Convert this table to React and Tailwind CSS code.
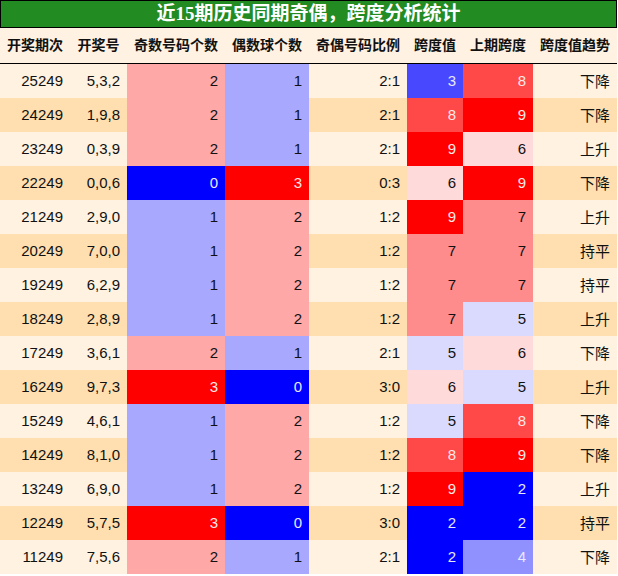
const rows = [
  ["25249", "5,3,2", 2, 1, "2:1", 3, 8, "下降"],
  ["24249", "1,9,8", 2, 1, "2:1", 8, 9, "下降"],
  ["23249", "0,3,9", 2, 1, "2:1", 9, 6, "上升"],
  ["22249", "0,0,6", 0, 3, "0:3", 6, 9, "下降"],
  ["21249", "2,9,0", 1, 2, "1:2", 9, 7, "上升"],
  ["20249", "7,0,0", 1, 2, "1:2", 7, 7, "持平"],
  ["19249", "6,2,9", 1, 2, "1:2", 7, 7, "持平"],
  ["18249", "2,8,9", 1, 2, "1:2", 7, 5, "上升"],
  ["17249", "3,6,1", 2, 1, "2:1", 5, 6, "下降"],
  ["16249", "9,7,3", 3, 0, "3:0", 6, 5, "上升"],
  ["15249", "4,6,1", 1, 2, "1:2", 5, 8, "下降"],
  ["14249", "8,1,0", 1, 2, "1:2", 8, 9, "下降"],
  ["13249", "6,9,0", 1, 2, "1:2", 9, 2, "上升"],
  ["12249", "5,7,5", 3, 0, "3:0", 2, 2, "持平"],
  ["11249", "7,5,6", 2, 1, "2:1", 2, 4, "下降"],
];

// odd / even count cells
const countCls = {
  0: "bg-[#0000ff] text-[#e8e8ff]",
  1: "bg-[#a8a8ff] text-[#111]",
  2: "bg-[#ffa8a8] text-[#111]",
  3: "bg-[#ff0000] text-[#ffe8e8]",
};

// span cells
const spanCls = {
  2: "bg-[#0000ff] text-[#e8e8ff]",
  3: "bg-[#4848ff] text-[#e8e8ff]",
  4: "bg-[#9090ff] text-[#e8e8ff]",
  5: "bg-[#dadaff] text-[#111]",
  6: "bg-[#ffdada] text-[#111]",
  7: "bg-[#ff8c8c] text-[#111]",
  8: "bg-[#ff4848] text-[#ffe8e8]",
  9: "bg-[#ff0000] text-[#ffe8e8]",
};

const headers = [
  ["开奖期次", "w-[70px]"],
  ["开奖号", "w-[57px]"],
  ["奇数号码个数", "w-[98px]"],
  ["偶数球个数", "w-[84px]"],
  ["奇偶号码比例", "w-[98px]"],
  ["跨度值", "w-[56px]"],
  ["上期跨度", "w-[70px]"],
  ["跨度值趋势", "flex-1"],
];

function Cell({ w, cls = "", children }) {
  return (
    <div className={`${w} ${cls} h-full flex items-center justify-end pr-[7px]`}>
      {children}
    </div>
  );
}

export default function App() {
  return (
    <div
      className="w-[618px] h-[576px] bg-white text-[15px] text-[#111]"
      style={{ fontFamily: '"Liberation Sans", Arial, "Noto Sans CJK SC", sans-serif' }}
    >
      <div className="w-[617px]">
        <div
          className="h-[28px] bg-[#228b22] border border-black flex items-center justify-center text-white font-bold text-[19px]"
          style={{ fontFamily: '"Liberation Serif", "Noto Sans CJK SC", serif' }}
        >
          近15期历史同期奇偶，跨度分析统计
        </div>
        <div className="h-[36px] bg-[#fff2e2] border-b border-black flex items-center font-bold text-[14px]">
          {headers.map(([t, w]) => (
            <div key={t} className={`${w} text-center`}>
              {t}
            </div>
          ))}
        </div>
        {rows.map((r, i) => (
          <div
            key={r[0]}
            className={`h-[34px] flex ${i % 2 === 0 ? "bg-[#fff2e1]" : "bg-[#ffdfb0]"}`}
          >
            <Cell w="w-[70px]">{r[0]}</Cell>
            <Cell w="w-[57px]">{r[1]}</Cell>
            <Cell w="w-[98px]" cls={countCls[r[2]]}>{r[2]}</Cell>
            <Cell w="w-[84px]" cls={countCls[r[3]]}>{r[3]}</Cell>
            <Cell w="w-[98px]">{r[4]}</Cell>
            <Cell w="w-[56px]" cls={spanCls[r[5]]}>{r[5]}</Cell>
            <Cell w="w-[70px]" cls={spanCls[r[6]]}>{r[6]}</Cell>
            <Cell w="flex-1">
              <span style={{ fontFamily: '"Noto Sans CJK SC", sans-serif' }}>{r[7]}</span>
            </Cell>
          </div>
        ))}
      </div>
    </div>
  );
}
